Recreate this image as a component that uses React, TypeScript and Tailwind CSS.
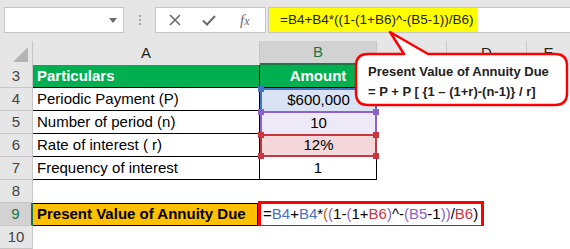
import React from "react";

const Handle = ({ pos, color }: { pos: string; color: string }) => (
  <div className={`absolute w-[6px] h-[6px] ${pos}`} style={{ backgroundColor: color }} />
);

const RowHead = ({ n, selected }: { n: number; selected?: boolean }) => (
  <div
    className={
      selected
        ? "w-[33px] shrink-0 h-full flex items-center justify-center bg-[#d2d2d2] border-b border-[#c6c6c6] border-r-2 border-r-[#217346] text-[#217346] text-[15px]"
        : "w-[33px] shrink-0 h-full flex items-center justify-center bg-[#e6e6e6] border-b border-r border-[#c6c6c6] text-[#444] text-[15px]"
    }
  >
    {n}
  </div>
);

export default function App() {
  const blue = "#4472c4";
  const purple = "#8a62c8";
  const red = "#c8363f";
  return (
    <div
      className="relative w-[570px] h-[249px] overflow-hidden bg-[#e6e6e6] text-black"
      style={{ fontFamily: '"Liberation Sans", Arial, sans-serif' }}
    >
      {/* Toolbar */}
      <div className="h-[41px] flex items-start pt-[7px]">
        <div className="ml-[4px] w-[120px] h-[26px] bg-white border border-[#c6c6c6] flex items-center justify-end pr-[6px]">
          <svg width="8" height="5" viewBox="0 0 8 5">
            <path d="M0 0 L8 0 L4 5 Z" fill="#6b6b6b" />
          </svg>
        </div>
        <div className="w-[31px] h-[26px] flex flex-col items-center justify-center gap-[2px]">
          <div className="w-[2px] h-[2px] bg-[#a6a6a6]" />
          <div className="w-[2px] h-[2px] bg-[#a6a6a6]" />
          <div className="w-[2px] h-[2px] bg-[#a6a6a6]" />
        </div>
        <div className="w-[111px] h-[26px] bg-white border border-[#c6c6c6] flex items-center">
          <svg width="12" height="12" viewBox="0 0 12 12" className="ml-[13px]">
            <path d="M1 1 L11 11 M11 1 L1 11" stroke="#6b6b6b" strokeWidth="1.6" />
          </svg>
          <svg width="14" height="11" viewBox="0 0 14 11" className="ml-[21px]">
            <path d="M1 5.5 L5 9.5 L13 1" stroke="#6b6b6b" strokeWidth="2" fill="none" />
          </svg>
          <span
            className="ml-[24px] italic text-[15px] text-[#6b6b6b] leading-none"
            style={{ fontFamily: '"Liberation Serif", serif' }}
          >
            f<span className="text-[12px]">x</span>
          </span>
        </div>
        <div className="ml-[2px] flex-1 h-[26px] bg-white border-y border-l border-[#c6c6c6] flex items-center">
          <div className="h-[24px] w-[209px] bg-[#ffff00] flex items-center pl-[11px] text-[13.5px] text-[#222]">
            =B4+B4*((1-(1+B6)^-(B5-1))/B6)
          </div>
        </div>
      </div>

      {/* Column headers */}
      <div className="h-[24px] flex text-[15px]">
        <div className="w-[33px] shrink-0 h-full border-r border-[#c6c6c6] bg-[#e6e6e6] flex items-end justify-end pr-[4px] pb-[3px]">
          <svg width="15" height="15" viewBox="0 0 15 15">
            <path d="M15 0 L15 15 L0 15 Z" fill="#b4b4b4" />
          </svg>
        </div>
        <div className="w-[227px] shrink-0 h-full border-r border-[#c6c6c6] flex items-center justify-center text-[#222]">A</div>
        <div className="w-[117px] shrink-0 h-full bg-[#d2d2d2] border-r border-[#c6c6c6] border-b-2 border-b-[#217346] flex items-center justify-center text-[#217346]">B</div>
        <div className="w-[70px] shrink-0 h-full border-r border-[#c6c6c6] flex items-center justify-center text-[#222]">C</div>
        <div className="w-[80px] shrink-0 h-full border-r border-[#c6c6c6] flex items-center justify-center text-[#222]">D</div>
        <div className="flex-1 h-full flex items-center justify-center text-[#222]">E</div>
      </div>

      {/* Rows */}
      <div className="text-[15px]">
        {/* Row 3 */}
        <div className="h-[23px] flex">
          <RowHead n={3} />
          <div className="w-[227px] shrink-0 h-full bg-[#00b050] border-b border-r border-black pl-[4px] flex items-center font-bold text-white">Particulars</div>
          <div className="w-[117px] shrink-0 h-full bg-[#00b050] border-b border-r border-black flex items-center justify-center font-bold text-white">Amount</div>
          <div className="flex-1 h-full bg-white" />
        </div>
        {/* Row 4 */}
        <div className="h-[23px] flex">
          <RowHead n={4} />
          <div className="w-[227px] shrink-0 h-full bg-white border-b border-r border-black pl-[4px] flex items-center">Periodic Payment (P)</div>
          <div className="relative w-[117px] shrink-0 h-full bg-[#dae3f3] border-t-2 border-x-2 border-[#4472c4] flex items-center justify-center">
            $600,000
            <Handle pos="-top-[4px] -left-[4px]" color={blue} />
            <Handle pos="-top-[4px] -right-[4px]" color={blue} />
          </div>
          <div className="flex-1 h-full bg-white" />
        </div>
        {/* Row 5 */}
        <div className="h-[23px] flex">
          <RowHead n={5} />
          <div className="w-[227px] shrink-0 h-full bg-white border-b border-r border-black pl-[4px] flex items-center">Number of period (n)</div>
          <div className="relative z-[1] w-[117px] shrink-0 h-full bg-[#ede9f7] border-t-2 border-x-2 border-[#8a62c8] flex items-center justify-center">
            10
            <Handle pos="-top-[4px] -left-[4px]" color={purple} />
            <Handle pos="-top-[4px] -right-[4px]" color={purple} />
          </div>
          <div className="flex-1 h-full bg-white" />
        </div>
        {/* Row 6 */}
        <div className="h-[23px] flex">
          <RowHead n={6} />
          <div className="w-[227px] shrink-0 h-full bg-white border-b border-r border-black pl-[4px] flex items-center">Rate of interest ( r)</div>
          <div className="relative z-[2] w-[117px] shrink-0 h-full bg-[#f4d7d8] border-2 border-[#c8363f] flex items-center justify-center">
            12%
            <Handle pos="-top-[4px] -left-[4px]" color={red} />
            <Handle pos="-top-[4px] -right-[4px]" color={red} />
            <Handle pos="-bottom-[4px] -left-[4px]" color={red} />
            <Handle pos="-bottom-[4px] -right-[4px]" color={red} />
          </div>
          <div className="flex-1 h-full bg-white" />
        </div>
        {/* Row 7 */}
        <div className="h-[23px] flex">
          <RowHead n={7} />
          <div className="w-[227px] shrink-0 h-full bg-white border-b border-r border-black pl-[4px] flex items-center">Frequency of interest</div>
          <div className="w-[117px] shrink-0 h-full bg-white border-b border-r border-black flex items-center justify-center">1</div>
          <div className="flex-1 h-full bg-white" />
        </div>
        {/* Row 8 */}
        <div className="h-[23px] flex">
          <RowHead n={8} />
          <div className="flex-1 h-full bg-white" />
        </div>
        {/* Row 9 */}
        <div className="h-[23px] flex">
          <RowHead n={9} selected />
          <div className="w-[225px] shrink-0 h-full bg-[#ffc000] border-y border-r border-black pl-[4px] flex items-center font-bold">Present Value of Annuity Due</div>
          <div className="flex-1 h-full bg-white flex items-center">
            <div className="h-[27px] w-[226px] border-[3px] border-[#ff0000] bg-white flex items-center pl-[2px] whitespace-nowrap">
              <span>=</span>
              <span style={{ color: blue }}>B4</span>
              <span>+</span>
              <span style={{ color: blue }}>B4</span>
              <span>*</span>
              <span className="text-[#c55a11]">(</span>
              <span style={{ color: purple }}>(</span>
              <span>1-</span>
              <span style={{ color: purple }}>(</span>
              <span>1+</span>
              <span style={{ color: red }}>B6</span>
              <span style={{ color: purple }}>)</span>
              <span>^-</span>
              <span style={{ color: purple }}>(</span>
              <span style={{ color: purple }}>B5</span>
              <span>-1</span>
              <span style={{ color: purple }}>)</span>
              <span style={{ color: purple }}>)</span>
              <span>/</span>
              <span style={{ color: red }}>B6</span>
              <span>)</span>
            </div>
          </div>
        </div>
        {/* Row 10 */}
        <div className="h-[23px] flex">
          <RowHead n={10} />
          <div className="flex-1 h-full bg-white" />
        </div>
      </div>

      {/* Callout */}
      <svg className="absolute left-0 top-0 pointer-events-none z-10" width="570" height="249" viewBox="0 0 570 249">
        <path
          d="M368 54 L404 54 L390 32 L428 54 L555 54 Q567 54 567 66 L567 93 Q567 105 555 105 L368 105 Q356 105 356 93 L356 66 Q356 54 368 54 Z"
          fill="white"
          stroke="#ff0000"
          strokeWidth="2.5"
          strokeLinejoin="round"
        />
      </svg>
      <div className="absolute left-[368px] top-[62px] z-20 text-[13px] font-bold leading-[20px] text-[#222] whitespace-nowrap">
        <div>Present Value of Annuity Due</div>
        <div>= P + P [ {"{"}1 – (1+r)-(n-1){"}"} / r]</div>
      </div>
    </div>
  );
}
